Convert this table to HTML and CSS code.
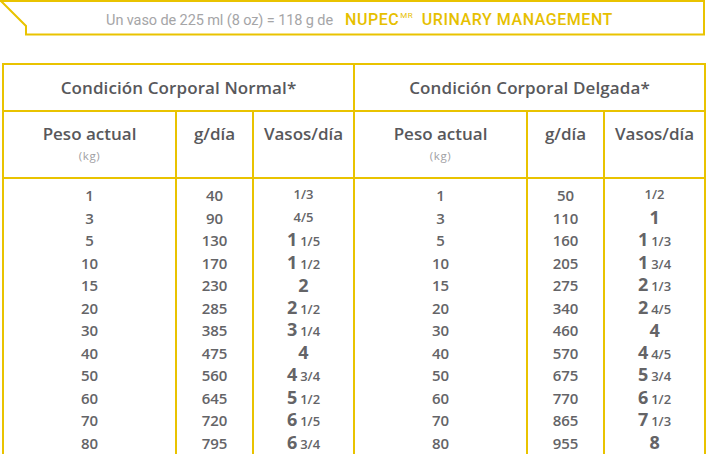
FILE: index.html
```html
<!DOCTYPE html>
<html lang="es">
<head>
<meta charset="utf-8">
<title>Ración diaria NUPEC Urinary Management</title>
<link rel="stylesheet" href="styles.css">
</head>
<body>
<div class="banner">
  <svg class="banner-frame" width="707" height="37" viewBox="0 0 707 37" aria-hidden="true">
    <path d="M0 1H704V34.5H26V26L0.5 0.5" fill="none" stroke="#e9c300" stroke-width="2"/>
  </svg>
  <p class="banner-text"><span class="lead">Un vaso de 225 ml (8 oz) = 118 g de</span><span class="brand">NUPEC<sup>MR</sup> URINARY MANAGEMENT</span></p>
</div>

<table class="ration">
  <colgroup>
    <col class="c-peso"><col class="c-g"><col class="c-v">
    <col class="c-peso"><col class="c-g"><col class="c-v">
  </colgroup>
  <thead>
    <tr class="group-row">
      <th colspan="3">Condición Corporal Normal*</th>
      <th colspan="3">Condición Corporal Delgada*</th>
    </tr>
    <tr class="head-row">
      <th>Peso actual<span class="unit">(kg)</span></th>
      <th>g/día</th>
      <th>Vasos/día</th>
      <th>Peso actual<span class="unit">(kg)</span></th>
      <th>g/día</th>
      <th>Vasos/día</th>
    </tr>
  </thead>
  <tbody>
    <tr class="first"><td>1</td><td>40</td><td><span class="fr solo">1/3</span></td><td>1</td><td>50</td><td><span class="fr solo">1/2</span></td></tr>
    <tr><td>3</td><td>90</td><td><span class="fr solo">4/5</span></td><td>3</td><td>110</td><td><span class="w">1</span></td></tr>
    <tr><td>5</td><td>130</td><td><span class="w">1</span><span class="fr">1/5</span></td><td>5</td><td>160</td><td><span class="w">1</span><span class="fr">1/3</span></td></tr>
    <tr><td>10</td><td>170</td><td><span class="w">1</span><span class="fr">1/2</span></td><td>10</td><td>205</td><td><span class="w">1</span><span class="fr">3/4</span></td></tr>
    <tr><td>15</td><td>230</td><td><span class="w">2</span></td><td>15</td><td>275</td><td><span class="w">2</span><span class="fr">1/3</span></td></tr>
    <tr><td>20</td><td>285</td><td><span class="w">2</span><span class="fr">1/2</span></td><td>20</td><td>340</td><td><span class="w">2</span><span class="fr">4/5</span></td></tr>
    <tr><td>30</td><td>385</td><td><span class="w">3</span><span class="fr">1/4</span></td><td>30</td><td>460</td><td><span class="w">4</span></td></tr>
    <tr><td>40</td><td>475</td><td><span class="w">4</span></td><td>40</td><td>570</td><td><span class="w">4</span><span class="fr">4/5</span></td></tr>
    <tr><td>50</td><td>560</td><td><span class="w">4</span><span class="fr">3/4</span></td><td>50</td><td>675</td><td><span class="w">5</span><span class="fr">3/4</span></td></tr>
    <tr><td>60</td><td>645</td><td><span class="w">5</span><span class="fr">1/2</span></td><td>60</td><td>770</td><td><span class="w">6</span><span class="fr">1/2</span></td></tr>
    <tr><td>70</td><td>720</td><td><span class="w">6</span><span class="fr">1/5</span></td><td>70</td><td>865</td><td><span class="w">7</span><span class="fr">1/3</span></td></tr>
    <tr><td>80</td><td>795</td><td><span class="w">6</span><span class="fr">3/4</span></td><td>80</td><td>955</td><td><span class="w">8</span></td></tr>
  </tbody>
</table>
</body>
</html>
```

FILE: styles.css
```css
html, body {
  margin: 0;
  padding: 0;
  background: #ffffff;
}

body {
  width: 707px;
  height: 454px;
  overflow: hidden;
  font-family: "Open Sans", "Liberation Sans", sans-serif;
  color: #5c5c5f;
}

.banner {
  position: relative;
  height: 36px;
  display: flex;
  align-items: center;
  justify-content: center;
  padding-left: 12px;
}

.banner-frame {
  position: absolute;
  left: 0;
  top: 0;
}

.banner-text {
  margin: 2px 0 0 0;
  font-family: Roboto, "Liberation Sans", sans-serif;
  white-space: nowrap;
  display: flex;
  align-items: baseline;
  gap: 12px;
}

.lead {
  font-size: 14.5px;
  color: #a5a5a7;
  letter-spacing: -0.1px;
}

.brand {
  font-size: 16px;
  font-weight: 500;
  color: #e6c000;
  letter-spacing: 0.55px;
}

.brand sup {
  font-size: 8px;
  font-weight: 400;
  vertical-align: 7px;
  margin-left: 1px;
  margin-right: 4px;
}

.ration {
  margin: 27px 0 0 2px;
  border-collapse: collapse;
  table-layout: fixed;
  width: 702px;
}

.c-peso { width: 173px; }
.c-g { width: 77px; }
.c-v { width: 101px; }

.ration th,
.ration td {
  border-left: 2px solid #e9c300;
  border-right: 2px solid #e9c300;
  padding: 0;
  text-align: center;
}

.ration thead th {
  border: 2px solid #e9c300;
  font-weight: 600;
  color: #58585b;
}

.group-row th {
  height: 45px;
  font-size: 17px;
  letter-spacing: 0.1px;
}

.head-row th {
  height: 67px;
  vertical-align: top;
  padding-top: 12px;
  box-sizing: border-box;
  font-size: 17px;
  line-height: 20px;
}

.unit {
  display: block;
  margin-top: 5px;
  font-size: 11.5px;
  font-weight: 400;
  line-height: 13px;
  color: #a0a0a3;
  letter-spacing: 0.6px;
}

.ration tbody td {
  height: 22.5px;
  font-size: 15px;
  font-weight: 600;
  line-height: 20px;
  color: #646467;
  vertical-align: middle;
}

.ration tbody tr.first td {
  padding-top: 5px;
}

.w {
  font-size: 18px;
  font-weight: 700;
}

.fr {
  font-size: 13px;
  font-weight: 600;
  margin-left: 3px;
}

.fr.solo {
  margin-left: 0;
  vertical-align: 3px;
}
```
